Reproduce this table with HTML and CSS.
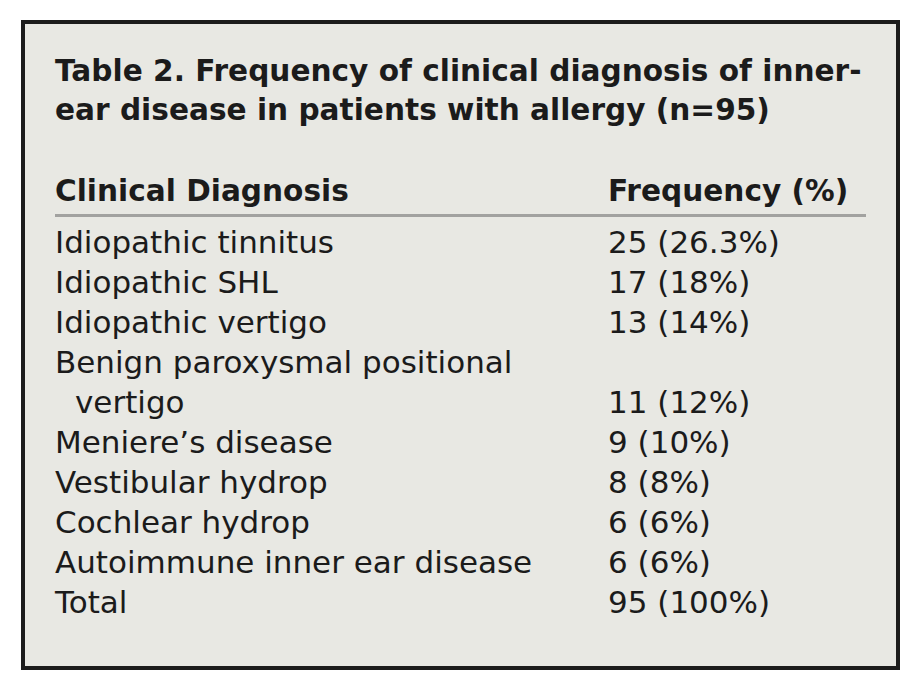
FILE: index.html
```html
<!DOCTYPE html>
<html>
<head>
<meta charset="utf-8">
<link rel="stylesheet" href="styles.css">
</head>
<body>
<div class="card">
  <h1 class="title">Table 2. Frequency of clinical diagnosis of inner-<br>ear disease in patients with allergy (n=95)</h1>
  <table class="freq">
    <thead>
      <tr><th class="c1">Clinical Diagnosis</th><th class="c2">Frequency (%)</th></tr>
    </thead>
    <tbody>
      <tr class="first"><td>Idiopathic tinnitus</td><td>25 (26.3%)</td></tr>
      <tr><td>Idiopathic SHL</td><td>17 (18%)</td></tr>
      <tr><td>Idiopathic vertigo</td><td>13 (14%)</td></tr>
      <tr><td class="wrap">Benign paroxysmal positional vertigo</td><td class="bottom">11 (12%)</td></tr>
      <tr><td>Meniere’s disease</td><td>9 (10%)</td></tr>
      <tr><td>Vestibular hydrop</td><td>8 (8%)</td></tr>
      <tr><td>Cochlear hydrop</td><td>6 (6%)</td></tr>
      <tr><td>Autoimmune inner ear disease</td><td>6 (6%)</td></tr>
      <tr><td>Total</td><td>95 (100%)</td></tr>
    </tbody>
  </table>
</div>
</body>
</html>
```
FILE: styles.css
```css
html, body {
  margin: 0;
  padding: 0;
  background: #ffffff;
}
body {
  padding: 20px 0 0 21px;
  font-family: "DejaVu Sans", sans-serif;
  color: #1b1b1b;
}
.card {
  box-sizing: border-box;
  width: 879px;
  height: 650px;
  border: 4px solid #1c1c1c;
  background: #e8e8e3;
  padding: 28px 0 0 30px;
}
.title {
  margin: 0;
  font-size: 29.6px;
  line-height: 39px;
  font-weight: bold;
}
.freq {
  margin-top: 41px;
  border-collapse: collapse;
  width: 811px;
  font-size: 31px;
  line-height: 40px;
}
.freq th {
  font-size: 29.6px;
  font-weight: bold;
  text-align: left;
  padding: 0 0 3px 0;
  border-bottom: 3px solid #a2a2a0;
}
.freq td {
  padding: 0;
  vertical-align: top;
}
.freq .first td {
  padding-top: 5px;
}
.freq .c1 { width: 553px; }
.freq td.wrap {
  padding-left: 20px;
  text-indent: -20px;
  padding-right: 30px;
}
.freq td.bottom {
  vertical-align: bottom;
}
```
